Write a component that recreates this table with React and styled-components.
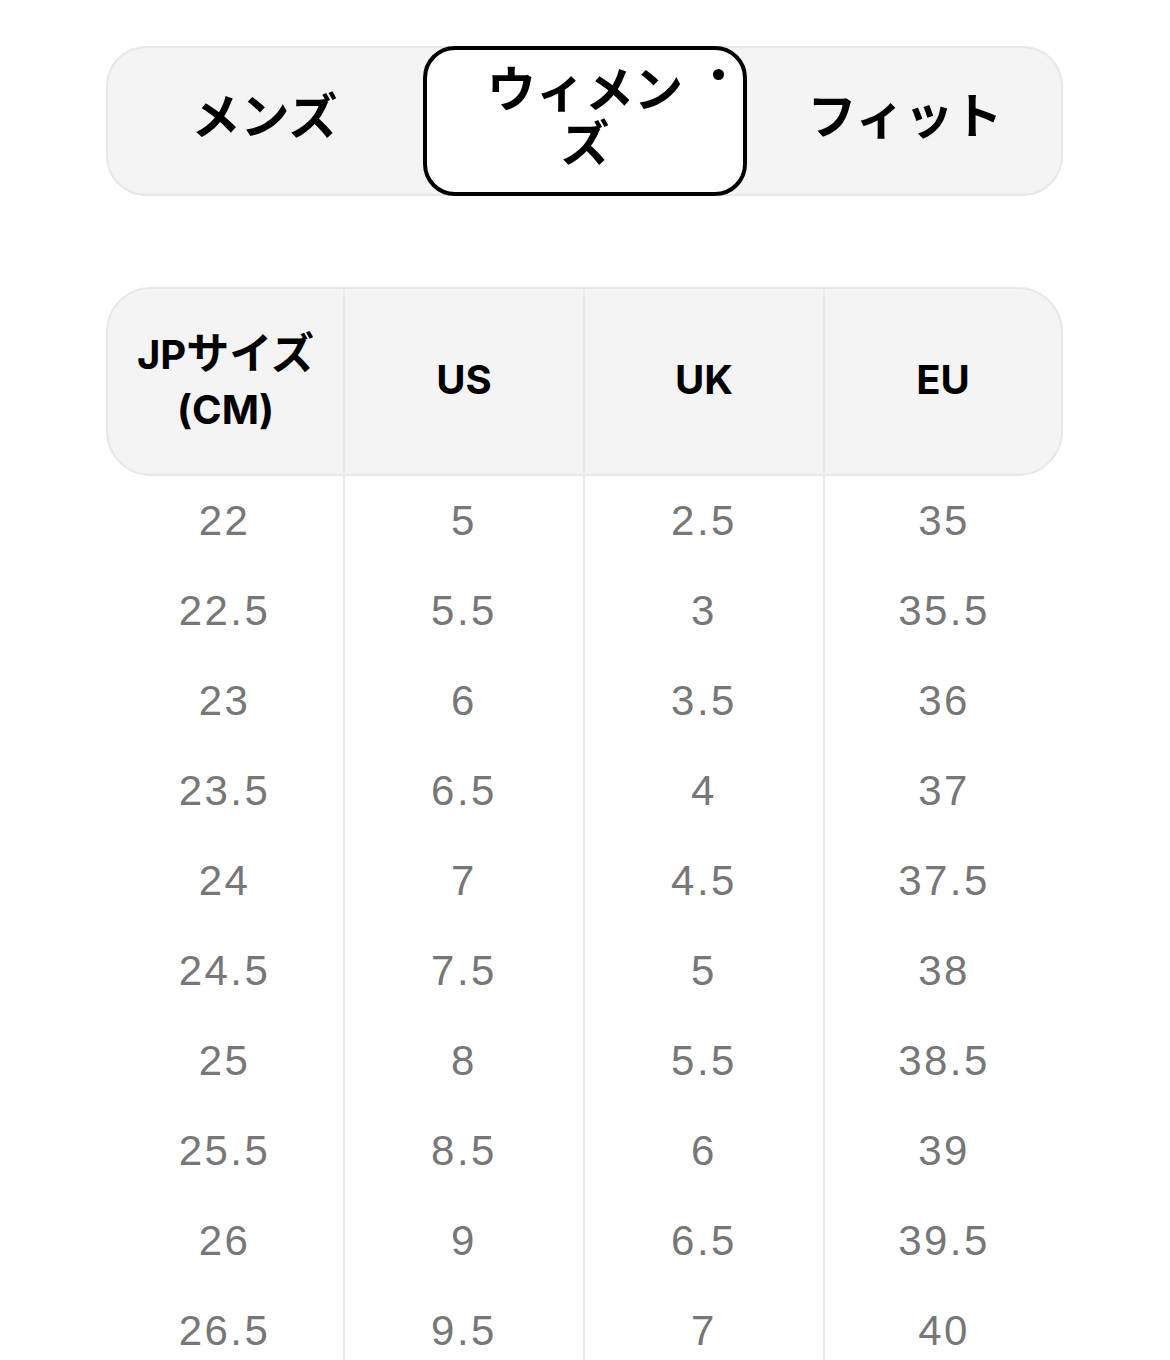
import React from "react";
import styled, { createGlobalStyle } from "styled-components";

const Global = createGlobalStyle`
  html, body { margin: 0; padding: 0; background: #fff; }
  body { font-family: Inter, "Noto Sans CJK JP", sans-serif; -webkit-font-smoothing: antialiased; }
`;

const Page = styled.div`
  padding: 46px 107px 0 106px;
  display: flex;
  flex-direction: column;
  gap: 91px;
`;

const TabBar = styled.div`
  display: grid;
  grid-template-columns: 317px 324px 1fr;
  height: 150px;
  background: #f4f4f4;
  border-radius: 40px;
  box-shadow: inset 0 0 0 2px #e8e8e8;
`;

const Tab = styled.div`
  position: relative;
  box-sizing: border-box;
  display: flex;
  align-items: center;
  justify-content: center;
  text-align: center;
  padding: 0 46px 16px;
  font-family: "Noto Sans CJK JP", sans-serif;
  font-weight: 700;
  font-size: 49px;
  line-height: 54px;
  color: #000;
  border-radius: 32px;
  background: ${(p) => (p.$active ? "#fff" : "transparent")};
  border: ${(p) => (p.$active ? "4px solid #000" : "none")};
`;

const Dot = styled.span`
  position: absolute;
  top: 19px;
  right: 19px;
  width: 11px;
  height: 11px;
  border-radius: 50%;
  background: #000;
`;

const Table = styled.div`
  display: grid;
  grid-template-columns: 237px 240px 240px 1fr;
`;

const HeadRow = styled.div`
  grid-column: 1 / -1;
  display: grid;
  grid-template-columns: 235px 240px 240px 1fr;
  height: 189px;
  box-sizing: border-box;
  background: #f4f4f4;
  border: 2px solid #e8e8e8;
  border-radius: 45px;
  overflow: hidden;
`;

const HeadCell = styled.div`
  display: flex;
  align-items: center;
  justify-content: center;
  text-align: center;
  padding: 0 6px 4px;
  font-family: Inter, "Noto Sans CJK JP", sans-serif;
  font-weight: 700;
  font-size: 40px;
  line-height: 55px;
  color: #000;
  border-left: ${(p) => (p.$first ? "none" : "2px solid #e8e8e8")};
`;

const Kana = styled.span`
  font-family: "Noto Sans CJK JP", sans-serif;
  font-size: 43px;
`;

const Cell = styled.div`
  height: 90px;
  display: flex;
  align-items: center;
  justify-content: center;
  font-family: "Liberation Sans", Arial, sans-serif;
  font-size: 42px;
  letter-spacing: 2.5px;
  color: #777;
  border-left: ${(p) => (p.$first ? "none" : "2px solid #e8e8e8")};
`;

const rows = [
  ["22", "5", "2.5", "35"],
  ["22.5", "5.5", "3", "35.5"],
  ["23", "6", "3.5", "36"],
  ["23.5", "6.5", "4", "37"],
  ["24", "7", "4.5", "37.5"],
  ["24.5", "7.5", "5", "38"],
  ["25", "8", "5.5", "38.5"],
  ["25.5", "8.5", "6", "39"],
  ["26", "9", "6.5", "39.5"],
  ["26.5", "9.5", "7", "40"],
];

export default function App() {
  return (
    <>
      <Global />
      <Page>
        <TabBar>
          <Tab>メンズ</Tab>
          <Tab $active>
            ウィメンズ
            <Dot />
          </Tab>
          <Tab>フィット</Tab>
        </TabBar>
        <Table>
          <HeadRow>
            <HeadCell $first>
              <span>
                JP<Kana>サイズ</Kana>
                <br />
                (CM)
              </span>
            </HeadCell>
            <HeadCell>US</HeadCell>
            <HeadCell>UK</HeadCell>
            <HeadCell>EU</HeadCell>
          </HeadRow>
          {rows.map((r, i) =>
            r.map((v, j) => (
              <Cell key={`${i}-${j}`} $first={j === 0}>
                {v}
              </Cell>
            ))
          )}
        </Table>
      </Page>
    </>
  );
}
